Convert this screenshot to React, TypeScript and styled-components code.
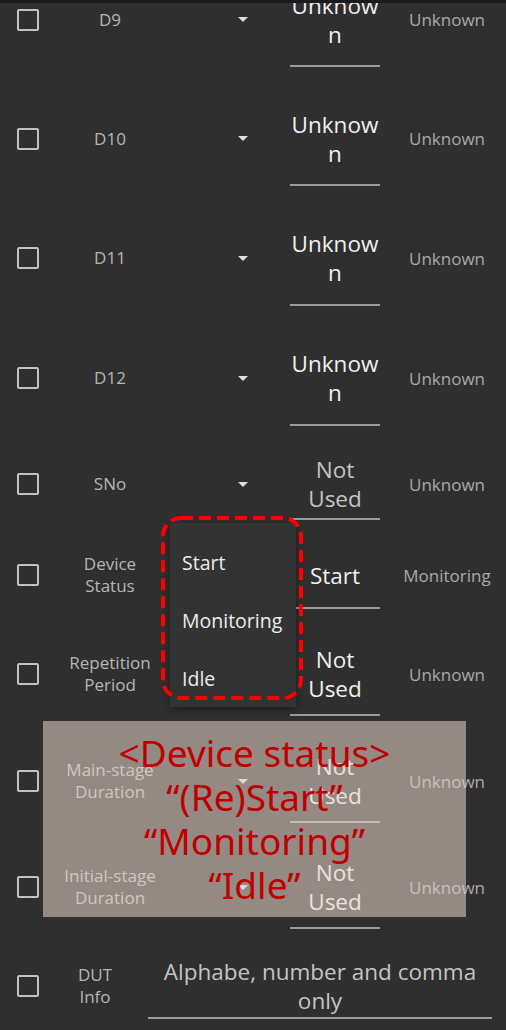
import React from "react";
import styled, { createGlobalStyle } from "styled-components";

const GlobalStyle = createGlobalStyle`
  html, body {
    margin: 0;
    padding: 0;
    background: #2f2f2f;
  }
  body {
    font-family: "Open Sans", Roboto, sans-serif;
  }
`;

const Screen = styled.div`
  position: relative;
  width: 506px;
  height: 1030px;
  overflow: hidden;
  background: #2f2f2f;
  display: flex;
  flex-direction: column;
`;

const TopEdge = styled.div`
  flex: none;
  height: 3px;
  background: #1b1b1b;
`;

const Viewport = styled.div`
  flex: 1;
  overflow: hidden;
`;

const List = styled.div`
  margin-top: -43px;
  display: flex;
  flex-direction: column;
`;

const Row = styled.div<{ $h: number }>`
  height: ${(p) => p.$h}px;
  display: grid;
  grid-template-columns: 56px 108px 126px 90px 1fr;
  align-items: center;
`;

const WideRow = styled(Row)`
  grid-template-columns: 56px 78px 1fr;
`;

const CheckCell = styled.div`
  display: flex;
  justify-content: center;
`;

const CheckBox = styled.div`
  width: 22px;
  height: 22px;
  box-sizing: border-box;
  border: 2.4px solid #c2c2c2;
  border-radius: 2px;
`;

const Label = styled.div`
  text-align: center;
  font-size: 17px;
  line-height: 22px;
  color: #b6b6b6;
`;

const SpinnerCell = styled.div`
  display: flex;
  justify-content: flex-end;
  padding-right: 42px;
`;

const Arrow = styled.div`
  width: 0;
  height: 0;
  border-left: 5px solid transparent;
  border-right: 5px solid transparent;
  border-top: 5px solid #dcdcdc;
`;

const ValueCell = styled.div<{ $gap: number; $inset?: number }>`
  padding: ${(p) => p.$gap + 2}px 0 ${(p) => p.$gap}px;
  margin: 0 ${(p) => p.$inset ?? 0}px;
  border-bottom: 2px solid #9c9c9c;
`;

const ValueText = styled.div<{ $hint?: boolean }>`
  text-align: center;
  font-size: 22.5px;
  line-height: 29px;
  overflow-wrap: anywhere;
  color: ${(p) => (p.$hint ? "#c4c4c4" : "#f0f0f0")};
`;

const Status = styled.div`
  padding-left: 8px;
  text-align: center;
  font-size: 17px;
  color: #a9a9a9;
`;

const Popup = styled.div`
  position: absolute;
  left: 170px;
  top: 523px;
  width: 126px;
  height: 184px;
  box-sizing: border-box;
  padding-top: 10px;
  background: #333333;
  box-shadow: 0 2px 8px rgba(0, 0, 0, 0.45);
`;

const PopupItem = styled.div`
  height: 58px;
  display: flex;
  align-items: center;
  padding-left: 12px;
  font-size: 19.5px;
  color: #ececec;
`;

const DashFrame = styled.svg`
  position: absolute;
  left: 159px;
  top: 514px;
`;

const Note = styled.div`
  position: absolute;
  left: 43px;
  top: 721px;
  width: 423px;
  height: 196px;
  background: rgba(232, 214, 200, 0.55);
  display: flex;
  flex-direction: column;
  align-items: center;
  justify-content: center;
  font-family: "Noto Sans", "Noto Sans CJK KR", sans-serif;
  font-size: 37px;
  line-height: 44px;
  color: #c00000;
`;

type Item = {
  label: React.ReactNode;
  value: string;
  hint?: boolean;
  status: string;
  h: number;
  gap: number;
};

const items: Item[] = [
  { label: "D9", value: "Unknown", status: "Unknown", h: 119, gap: 16.5 },
  { label: "D10", value: "Unknown", status: "Unknown", h: 119, gap: 16.5 },
  { label: "D11", value: "Unknown", status: "Unknown", h: 120, gap: 16.5 },
  { label: "D12", value: "Unknown", status: "Unknown", h: 120, gap: 16.5 },
  { label: "SNo", value: "Not Used", hint: true, status: "Unknown", h: 92, gap: 5 },
  { label: <>Device<br />Status</>, value: "Start", status: "Monitoring", h: 90, gap: 17.5 },
  { label: <>Repetition<br />Period</>, value: "Not Used", status: "Unknown", h: 108, gap: 11 },
  { label: <>Main-stage<br />Duration</>, value: "Not Used", status: "Unknown", h: 106, gap: 11 },
  { label: <>Initial-stage<br />Duration</>, value: "Not Used", status: "Unknown", h: 106, gap: 11 },
];

export default function App() {
  return (
    <Screen>
      <GlobalStyle />
      <TopEdge />
      <Viewport>
        <List>
          {items.map((it, i) => (
            <Row key={i} $h={it.h}>
              <CheckCell>
                <CheckBox />
              </CheckCell>
              <Label>{it.label}</Label>
              <SpinnerCell>
                <Arrow />
              </SpinnerCell>
              <ValueCell $gap={it.gap}>
                <ValueText $hint={it.hint}>{it.value}</ValueText>
              </ValueCell>
              <Status>{it.status}</Status>
            </Row>
          ))}
          <WideRow $h={91}>
            <CheckCell>
              <CheckBox />
            </CheckCell>
            <Label>
              DUT
              <br />
              Info
            </Label>
            <ValueCell $gap={2.5} $inset={14}>
              <ValueText $hint>Alphabe, number and comma only</ValueText>
            </ValueCell>
          </WideRow>
        </List>
      </Viewport>

      <Popup>
        <PopupItem>Start</PopupItem>
        <PopupItem>Monitoring</PopupItem>
        <PopupItem>Idle</PopupItem>
      </Popup>

      <DashFrame width="146" height="190" viewBox="0 0 146 190">
        <rect
          x="4"
          y="4"
          width="138"
          height="180"
          rx="18"
          fill="none"
          stroke="#ff0000"
          strokeWidth="4"
          strokeDasharray="12 6"
        />
      </DashFrame>

      <Note>
        <div>&lt;Device status&gt;</div>
        <div>“(Re)Start”</div>
        <div>“Monitoring”</div>
        <div>“Idle”</div>
      </Note>
    </Screen>
  );
}
